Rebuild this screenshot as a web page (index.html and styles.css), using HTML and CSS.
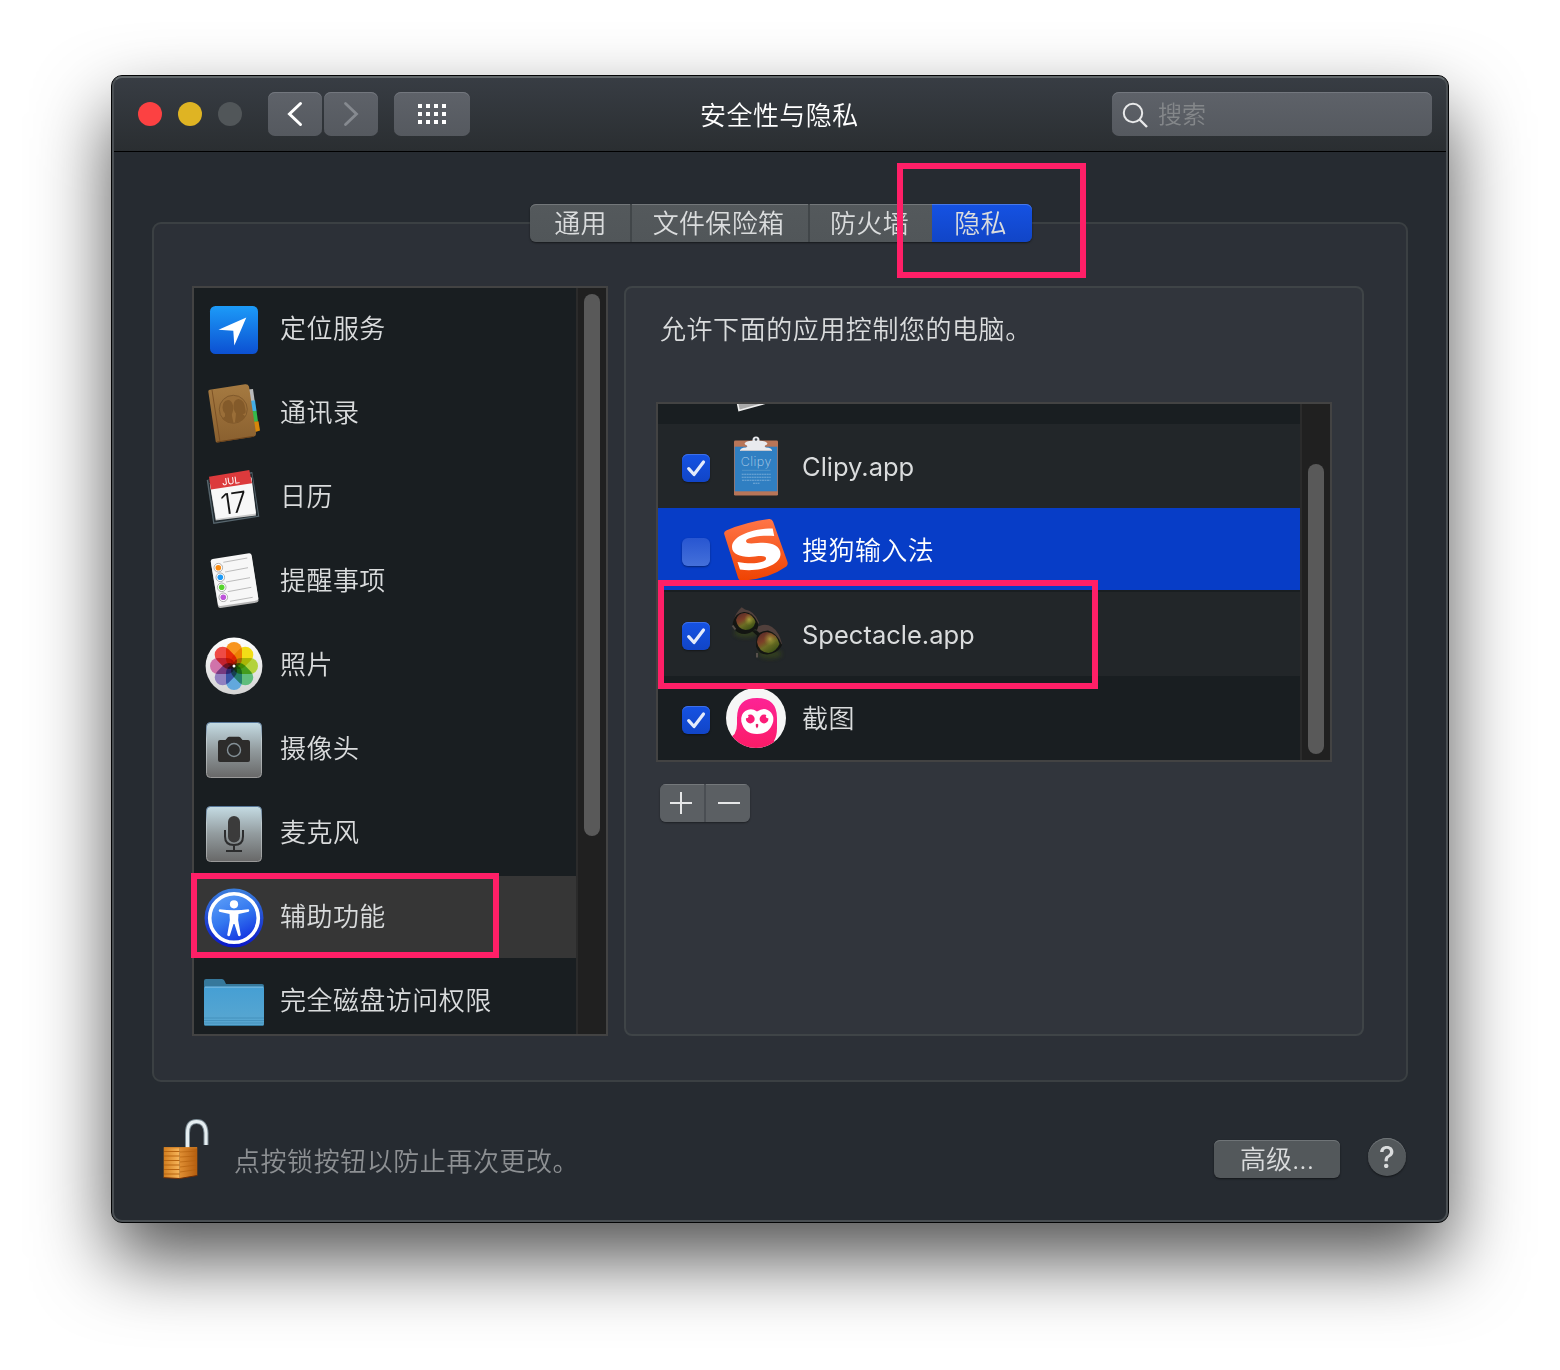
FILE: index.html
```html
<!DOCTYPE html>
<html lang="zh-CN">
<head>
<meta charset="utf-8">
<title>安全性与隐私</title>
<link rel="stylesheet" href="styles.css">
</head>
<body>
<main class="window">
  <header class="titlebar">
    <div class="lights"><i class="light red"></i><i class="light yellow"></i><i class="light off"></i></div>
    <div class="nav">
      <button class="tool"><svg width="54" height="44" viewBox="0 0 54 44"><path d="M32.5 11.5 21.5 22l11 10.500" fill="none" stroke="#fff" stroke-width="3" stroke-linecap="round"/></svg></button>
      <button class="tool"><svg width="54" height="44" viewBox="0 0 54 44"><path d="M21.500 11.500 32.500 22l-11 10.500" fill="none" stroke="#868a90" stroke-width="2.800" stroke-linecap="round"/></svg></button>
    </div>
    <button class="tool grid"><svg width="76" height="44" viewBox="0 0 76 44"><path d="M26 14h30M26 22h30M26 30h30" transform="translate(-2)" stroke="#fff" stroke-width="4" stroke-dasharray="4 4"/></svg></button>
    <h1 class="title">安全性与隐私</h1>
    <div class="search"><svg width="28" height="28" viewBox="0 0 28 28" fill="none" stroke="#e8e9ea" stroke-width="2"><circle cx="11" cy="11" r="9.200"/><path d="m17.500 17.500 7.500 7.500" stroke-width="2.400"/></svg><span>搜索</span></div>
  </header>

  <section class="content">
    <nav class="tabs">
      <a class="tab t1">通用</a><a class="tab t2">文件保险箱</a><a class="tab t3">防火墙</a><a class="tab t4 active">隐私</a>
      <span class="mark mark-tab"></span>
    </nav>
    <div class="group">
      <div class="listbox services">
        <ul class="rows">
          <li class="row">
            <svg class="icon" viewBox="0 0 60 60"><defs><linearGradient id="loc" x2="0" y2="1"><stop stop-color="#1c9bf8"/><stop offset="1" stop-color="#0c50d2"/></linearGradient></defs><rect x="6" y="6" width="48" height="48" rx="5.500" fill="url(#loc)"/><path d="M42.300 17.500 30.300 45.500 29.300 30.700 14.500 29.700z" fill="#fff"/></svg>
            <span>定位服务</span></li>
          <li class="row">
            <svg class="icon" viewBox="0 0 60 60"><defs><linearGradient id="book" x2="0" y2="1"><stop stop-color="#a57a41"/><stop offset="1" stop-color="#8a602f"/></linearGradient></defs><path d="m44 5.500 5-.5 1.700 12-6 1z" fill="#b9babb"/><path d="m46 17 5-.7L52.500 27l-6 1z" fill="#43aee6"/><path d="m47 27.500 5.500-.7L54 37.500l-6 1z" fill="#35b94b"/><path d="m49 38 5.500-.8L56 46.500l-6 2z" fill="#d88709"/><path d="M4.300 7.500q0-1.500 1.500-1.800L41 .2q3-.4 4 2.300L52 49q.4 3-2.500 3.700l-36 5.800q-1.500.3-1.800-1z" fill="url(#book)"/><path d="m8 6 8 52" stroke="#74491f" stroke-width=".8"/><path d="m13 58 37-5.700" stroke="#6c431b"/><circle cx="29.300" cy="25.300" r="14" fill="#9a6e38" stroke="#80592c"/><g fill="#835a2a"><path d="M24 16q-5.500.5-5.500 7.500 0 3.500 2.500 6v3l-3 2q5 5 11.500 4.500l-1.500-7q-.5-2 .5-3.500 1.500-3 .5-7-1.300-5.500-5-5.500z"/><path d="M34.500 15q-5 .5-5 7 0 5 2.500 7.500l-1 9q7-.5 10.500-6l-3-2.500q4 .2 3-4-.8-10.500-7-11z"/></g></svg>
            <span>通讯录</span></li>
          <li class="row">
            <svg class="icon" viewBox="0 0 60 60"><path d="M2.700 12 48.300 4l7 44.700-46 7.300z" fill="#57666e"/><path d="m4.200 12 43.700-6.500 6.200 42.300-43.800 6.700z" fill="#222b30"/><path d="M5.700 15 47 9l5 38.500-40.300 5z" fill="#c9c9c9"/><path d="m6 16 41.500-6.500 4.500 36-40 5.500z" fill="#f8f8f8"/><path d="M5 8.700 45.300 2 48 15.300 6.900 21.500z" fill="#dc3a3c"/><text x="18.500" y="17.500" transform="rotate(-8 18 18)" font-size="9.500" fill="#fff" class="glyph" font-weight="400">JUL</text><text x="16.500" y="45.500" transform="rotate(-8 28 34)" font-size="29" letter-spacing="-1" fill="#161616" class="day">17</text></svg>
            <span>日历</span></li>
          <li class="row">
            <svg class="icon" viewBox="0 0 60 60"><path d="M7 11q0-2 2-2.400L45 3q2-.2 2.600 1.800L54.500 48q.3 2-2 2.600L16.500 56q-2 .3-2.500-1.700z" fill="#b5b5b5"/><path d="M6.700 9.500q0-2 2-2.400L45 1.300q2-.2 2.600 1.800L54.300 46q.3 2-2 2.600L16.500 54q-2 .3-2.500-1.700z" fill="#f7f7f7"/><path d="m19.300 10.300 24-4.300M21 20l23-4.300M22 30l24-4.300M23.700 39.700l23.600-4.400M26 49.300l22.700-4" stroke="#b4b4b4" stroke-width=".9"/><g fill="#fff" stroke="#999" stroke-width=".8"><circle cx="14.300" cy="15.700" r="4.300"/><circle cx="16.300" cy="25.300" r="4.300"/><circle cx="17.700" cy="35.300" r="4.300"/><circle cx="19.300" cy="45.300" r="4.300"/></g><circle cx="14.300" cy="15.700" r="2.800" fill="#fa8b12"/><circle cx="16.300" cy="25.300" r="2.800" fill="#1b9af7"/><circle cx="17.700" cy="35.300" r="2.800" fill="#55d42c"/><circle cx="19.300" cy="45.300" r="2.800" fill="#bd54d9"/></svg>
            <span>提醒事项</span></li>
          <li class="row">
            <svg class="icon" viewBox="0 0 60 60"><defs><linearGradient id="disc" x2="0" y2="1"><stop stop-color="#fff"/><stop offset="1" stop-color="#d4d4d4"/></linearGradient></defs><circle cx="30" cy="30" r="28.400" fill="url(#disc)"/><g class="petals"><rect x="22" y="6" width="16" height="25" rx="8" fill="#f8951f"/><rect x="22" y="6" width="16" height="25" rx="8" fill="#f2dd17" transform="rotate(45 30 30)"/><rect x="22" y="6" width="16" height="25" rx="8" fill="#b3d23c" transform="rotate(90 30 30)"/><rect x="22" y="6" width="16" height="25" rx="8" fill="#60bd7c" transform="rotate(135 30 30)"/><rect x="22" y="6" width="16" height="25" rx="8" fill="#62a8dd" transform="rotate(180 30 30)"/><rect x="22" y="6" width="16" height="25" rx="8" fill="#9080c0" transform="rotate(225 30 30)"/><rect x="22" y="6" width="16" height="25" rx="8" fill="#d073aa" transform="rotate(270 30 30)"/><rect x="22" y="6" width="16" height="25" rx="8" fill="#ef4b46" transform="rotate(315 30 30)"/></g><circle cx="30" cy="30" r="1.500" fill="#fff"/></svg>
            <span>照片</span></li>
          <li class="row">
            <svg class="icon" viewBox="0 0 60 60"><defs><linearGradient id="tile" x2="0" y2="1"><stop stop-color="#c5dce4"/><stop offset=".5" stop-color="#929b9e"/><stop offset="1" stop-color="#686868"/></linearGradient><linearGradient id="rim" x2="0" y2="1"><stop stop-color="#577799"/><stop offset=".3" stop-color="#c1ccd0"/><stop offset="1" stop-color="#999"/></linearGradient></defs><rect x="2.500" y="2.500" width="55" height="55" rx="4" fill="url(#tile)" stroke="url(#rim)"/><path d="M16 20h5.500l2.300-2.700q.6-.6 1.500-.6h9.400q.9 0 1.500.6l2.300 2.700H44q2 0 2 2v18q0 2-2 2H16q-2 0-2-2V22q0-2 2-2z" fill="#2d2c2b"/><circle cx="30" cy="30" r="6.500" fill="#292929" stroke="#849097" stroke-width="1.400"/></svg>
            <span>摄像头</span></li>
          <li class="row">
            <svg class="icon" viewBox="0 0 60 60"><rect x="2.500" y="2.500" width="55" height="55" rx="4" fill="url(#tile)" stroke="url(#rim)"/><rect x="24" y="12" width="12" height="26.500" rx="6" fill="#3b3b3b"/><path d="M21 26v6.500q0 8.500 9 8.500t9-8.500V26M30 41v6M22 47h16" fill="none" stroke="#2c2d2e" stroke-width="2"/></svg>
            <span>麦克风</span></li>
          <li class="row selected">
            <svg class="icon" viewBox="0 0 60 60"><defs><linearGradient id="acc" x1=".2" x2=".7" y2="1"><stop stop-color="#5e9ff8"/><stop offset=".5" stop-color="#3478ef"/><stop offset="1" stop-color="#1231e1"/></linearGradient><linearGradient id="accrim" x2="0" y2="1"><stop stop-color="#3b7fdc"/><stop offset="1" stop-color="#0a17c9"/></linearGradient></defs><circle cx="30" cy="30" r="29.500" fill="url(#accrim)"/><circle cx="30" cy="30" r="24.300" fill="url(#acc)" stroke="#fff" stroke-width="3.600"/><circle cx="30" cy="16.300" r="4.100" fill="#fff"/><path d="M15.500 21.300q14.500 2 29 0 1.600.8.200 2.500L34.500 26q-.8 6 .3 10l2 11q-.6 1.800-2.600.8L30.500 36h-1l-3.700 11.800q-2 1-2.600-.8l2-11q1.100-4 .3-10l-10.200-2.200q-1.400-1.700.2-2.500z" fill="#fff"/></svg>
            <span>辅助功能</span></li>
          <li class="row">
            <svg class="icon" viewBox="0 0 60 60"><defs><linearGradient id="fold" x2="0" y2="1"><stop stop-color="#459fd4"/><stop offset="1" stop-color="#5aa7d0"/></linearGradient></defs><path d="M0 9q0-2 2-2h16q1.500 0 2.300 1.500L22 12h36q2 0 2 2v6H0z" fill="#36789b"/><path d="M0 16q0-1.500 1.500-1.500h57q1.500 0 1.500 1.500v36q0 2-2 2H2q-2 0-2-2z" fill="url(#fold)"/><path d="M1 15.200h58" stroke="#7dbce0"/><path d="M0 46h60M0 48.500h60M0 51h60" stroke="#3d8ab5" stroke-width=".7"/><path d="M1 53.500h58" stroke="#34799c"/></svg>
            <span>完全磁盘访问权限</span></li>
        </ul>
        <div class="track"><i class="thumb"></i></div>
        <span class="mark mark-service"></span>
      </div>

      <div class="panel">
        <p class="hint">允许下面的应用控制您的电脑。</p>
        <div class="listbox apps">
          <ul class="rows">
            <li class="peek"><svg width="40" height="10" viewBox="0 0 40 10"><path d="M1.500-1 3 6.500 30-1" fill="#a9a9a9" stroke="#eee" stroke-width="1.600"/></svg></li>
            <li class="row app alt"><i class="check on"><svg viewBox="0 0 28 28"><path d="m6.700 14.700 5.300 5.800L21.500 8" /></svg></i>
              <svg class="icon" viewBox="0 0 64 64"><rect x="10" y="6.500" width="44" height="55" rx="1.300" fill="#b87558"/><rect x="10.700" y="12.700" width="42.600" height="44.600" fill="#307fc2"/><path d="M16 17q0-3.500 6-3.500 2-.5 1-2-2-.5-2.500-1.700 1-2.800 8-3V6a3.500 3.500 0 0 1 7 0v.8q7 .2 8 3-.5 1.200-2.500 1.700-1 1.500 1 2 6 0 6 3.500z" fill="#e9eaee"/><path d="M16.500 16.500h31" stroke="#c2c7d1"/><circle cx="32" cy="5.500" r="1.300" fill="#40484e"/><text x="16.800" y="31.500" font-size="12.500" fill="#b4d2e9" textLength="30.500" class="glyph thin">Clipy</text><path d="M18 36.300h28.500" stroke="#5999cc" stroke-width=".8"/><path d="M17.700 40.300h29M17.700 43.300h29M18 46.300h28.500M29 49.300h6.500" stroke="#76abd7" stroke-width="1.100" stroke-dasharray="2 .5"/></svg>
              <span class="latin">Clipy.app</span></li>
            <li class="row app current"><i class="check"></i>
              <svg class="icon" viewBox="0 0 64 64"><defs><linearGradient id="sg" x2="0" y2="1"><stop stop-color="#ff7547"/><stop offset="1" stop-color="#ef4302"/></linearGradient></defs><path d="M.2 16q-.5-2.500 2-3.600Q22 4 45 1q3-.3 4 2.500L63.500 44q.8 2.500-1.200 4.500Q45 61 19 62.700q-4 .3-5-3z" fill="url(#sg)"/><path d="M48.700 10.500C28 10.500 8 18 8 29c0 8.500 12 11 23 9.500 8-1 11.500-.5 11 2.500C41 45 28 46.500 13.500 44L16 51.500C36 54.500 56.500 47 56.500 36c0-9.500-11-12.500-23-11-8 1-11.500.5-11.500-2C22.500 19 38 17 50.200 18z" fill="#fff"/></svg>
              <span>搜狗输入法</span></li>
            <li class="row app alt"><i class="check on"><svg viewBox="0 0 28 28"><path d="m6.700 14.700 5.300 5.800L21.500 8" /></svg></i>
              <svg class="icon" viewBox="0 0 64 64"><defs><linearGradient id="lens" x1=".1" y1=".1" x2=".7" y2="1"><stop stop-color="#5c2e28"/><stop offset=".35" stop-color="#7c4028"/><stop offset=".6" stop-color="#6c6c24"/><stop offset="1" stop-color="#3a5015"/></linearGradient><radialGradient id="glow"><stop stop-color="#b9b848" stop-opacity=".7"/><stop offset="1" stop-color="#8c9a30" stop-opacity="0"/></radialGradient><filter id="soft" x="-30%" y="-40%" width="160%" height="180%"><feGaussianBlur stdDeviation="2"/></filter></defs><g fill="#38461d" opacity=".7" filter="url(#soft)"><ellipse cx="22" cy="31" rx="12" ry="4.500"/><ellipse cx="46" cy="52" rx="12" ry="4.500"/></g><path d="M9.500 20Q11 11 17.700 5.300L21 7.500q9 1 14 13L32 26z" fill="#51403c"/><path d="M31 26.500q9-6.500 17-1.500 7 4.500 10 17l-8 3z" fill="#51403c"/><path d="M9 20q2-9 11-10 8-.5 13.500 10 1.500 3-.5 8l-2-1q-4 4.500-10 5-8 0-11-6l-1.500-2z" fill="#131512"/><path d="M28 29q4-2 7 2 4-2.500 9-2.500 9 2 14 14.500l-1 2q-5 7-14 7.500-8 0-11-8 0-7 1-11z" fill="#131512"/><path d="M12 18q2-7.500 9.500-7 7.500 1.500 10 9-2 8-10 8-8-1-9.500-10z" fill="url(#lens)"/><path d="M33 40q1-9.500 10-10 9.500 1 12.500 12-3 7.500-11 9-10-1-11.500-11z" fill="url(#lens)"/><ellipse cx="25" cy="17.500" rx="5" ry="6" fill="url(#glow)"/><ellipse cx="46" cy="37" rx="6.500" ry="7" fill="url(#glow)"/><path d="m8.500 23.500 3 4M33 51v4.500" stroke="#57504b" stroke-width="2"/></svg>
              <span class="latin">Spectacle.app</span></li>
            <li class="row app"><i class="check on"><svg viewBox="0 0 28 28"><path d="m6.700 14.700 5.300 5.800L21.500 8" /></svg></i>
              <svg class="icon" viewBox="0 0 64 64"><defs><clipPath id="owl"><circle cx="32" cy="32" r="30"/></clipPath><linearGradient id="pink" x2="0" y2="1"><stop stop-color="#fd2395"/><stop offset="1" stop-color="#fb1b65"/></linearGradient></defs><circle cx="32" cy="32" r="30" fill="#f6f6f6"/><g clip-path="url(#owl)"><path d="M4 52q9-2 9-14v-6q0-20 20-20t20 20v10q0 8-3 13v9H12z" fill="url(#pink)"/></g><path d="M33 25.500q8-5.500 14 1 3 3.500 2.200 9Q46 48 33 48T17.300 35.500q-1-7 4-10.500 6-3.500 11.700.5z" fill="#fff"/><circle cx="26.300" cy="33" r="4.400" fill="#fc1d78"/><circle cx="40" cy="33" r="4.400" fill="#fc1d78"/><circle cx="22.800" cy="30.500" r="1.700" fill="#fff"/><circle cx="43.600" cy="30.500" r="1.700" fill="#fff"/><path d="M31.700 38.500q1.300-1.300 2.600 0 .3 1.800-1.300 4-1.600-2.200-1.300-4z" fill="#e81c68"/></svg>
              <span>截图</span></li>
          </ul>
          <div class="track"><i class="thumb"></i></div>
          <span class="mark mark-app"></span>
        </div>
        <div class="stepper">
          <button><svg width="44" height="38" viewBox="0 0 44 38"><path d="M10 19h22M21 8v22" stroke="#e6e7e8" stroke-width="2"/></svg></button>
          <button><svg width="44" height="38" viewBox="0 0 44 38"><path d="M12 19h22" stroke="#e6e7e8" stroke-width="2"/></svg></button>
        </div>
      </div>
    </div>

    <footer class="footer">
      <svg class="lock" width="50" height="64" viewBox="0 0 50 64"><defs><linearGradient id="w1"><stop stop-color="#d27e1f"/><stop offset="1" stop-color="#f8b75c"/></linearGradient><linearGradient id="w2"><stop stop-color="#e08f33"/><stop offset="1" stop-color="#b45d0e"/></linearGradient></defs><path d="M27.500 32V17q0-11.500 9-11.500t9.500 11.500v12" fill="none" stroke="#7c8b94" stroke-width="5"/><path d="M27.500 32V17q0-11.500 9-11.500t9.500 11.500v12" fill="none" stroke="#e6eef1" stroke-width="3"/><path d="M3.700 31.300h16v31.200l-16-.8z" fill="url(#w1)"/><path d="M19.700 31.300h17.600V59.500l-17.600 3z" fill="url(#w2)"/><path d="M4 35.500h15.500M4 40h15.500M4 44.500h15.500M4 49h15.500M4 53.500h15.500M4 58h15.500" stroke="#b86511" stroke-width="1.200"/><path d="m20 36 17-.8M20 41l17-1M20 46l17-1.500M20 51l17-2M20 56l17-2.500" stroke="#b4610f" stroke-width=".7"/><path d="M3.700 61.700l16 .8 17.600-3" fill="none" stroke="#6e2b04"/><path d="M4 31.800h33" stroke="#d98324"/></svg>
      <p>点按锁按钮以防止再次更改。</p>
      <button class="advanced">高级...</button>
      <button class="help">?</button>
    </footer>
  </section>
</main>
</body>
</html>
```
FILE: styles.css
```css
* { box-sizing: border-box; margin: 0; padding: 0; }
body {
  width: 1560px; height: 1370px; padding: 75px 111px 0; overflow: hidden; background: #fff;
  font: 350 26px/38px Inter, "Noto Sans CJK SC", sans-serif; color: #dadcdd; letter-spacing: .45px;
}
svg { display: block; }
button { border: 0; font: inherit; color: inherit; letter-spacing: inherit; }
ul { list-style: none; }
.window {
  position: relative; width: 1338px; height: 1148px; border: 1px solid #030405; border-radius: 11px;
  background: #262b31; box-shadow: 0 36px 74px rgba(0,0,0,.68); display: flex; flex-direction: column;
}
.window::after {
  content: ""; position: absolute; inset: 0; border: 2px solid #4a4f53; border-top-color: #62686b; border-radius: 10px; pointer-events: none;
}
.titlebar {
  position: relative; height: 76px; border-bottom: 1px solid #000; border-radius: 10px 10px 0 0; flex: none;
  background: linear-gradient(#383d44, #2a2e31); display: flex; align-items: flex-start; padding: 16px 16px 0 26px;
}
.lights { display: flex; gap: 16px; padding-top: 10px; width: 130px; }
.light { width: 24px; height: 24px; border-radius: 50%; }
.red { background: #fc4142; }
.yellow { background: #dfb423; }
.off { background: #515659; }
.nav { display: flex; gap: 2px; margin-right: 16px; }
.tool, .search { height: 44px; border-radius: 7px; background: linear-gradient(#5e6269, #55595f); box-shadow: inset 0 1px #73777e; }
.tool { width: 54px; }
.grid { width: 76px; }
.title { flex: 1; padding: 5px 0 0 230px; font-size: 26px; font-weight: 350; color: #fff; white-space: nowrap; }
.search { width: 320px; padding: 10px 0 0 10px; display: flex; gap: 8px; line-height: 25px; font-size: 24px; color: #84878a; letter-spacing: 0; }
.content { display: flex; flex-direction: column; padding: 52px 40px 0; }
.tabs {
  position: relative; z-index: 1; width: 502px; height: 38px; margin: 0 0 -20px 378px; display: flex;
  border-radius: 6px; box-shadow: 0 1px 2px rgba(0,0,0,.5); letter-spacing: .3px;
}
.tab { height: 38px; line-height: 40px; text-align: center; background: linear-gradient(#54595c, #515659); box-shadow: inset 0 1px #73777a; border-right: 2px solid #414649; }
.t1 { width: 102px; border-radius: 6px 0 0 6px; padding-left: 1px; }
.t2 { width: 178px; padding-right: 3px; }
.t3 { width: 122px; border-right: 0; padding-right: 3px; }
.t4 { width: 100px; border: 0; border-radius: 0 6px 6px 0; padding-right: 3px; }
.tab.active { background: linear-gradient(#1552e3, #1145c7); box-shadow: inset 0 1px #4779eb; }
.mark { position: absolute; z-index: 3; border: 6px solid #ff1f67; }
.mark-tab { left: 367px; top: -41px; width: 189px; height: 115px; }
.mark-service { left: -3px; top: 585px; width: 308px; height: 85px; }
.mark-app { left: 0; top: 176px; width: 440px; height: 109px; }
.group {
  height: 860px; border: 2px solid #3b4043; border-radius: 9px; background: #2c3037;
  padding: 62px 42px 0 38px; display: flex; gap: 16px;
}
.listbox { position: relative; display: flex; border: 2px solid #434343; background: #191e21; }
.services { width: 416px; height: 750px; }
.rows { flex: 1; overflow: hidden; }
.row { height: 84px; display: flex; align-items: center; padding: 0 0 0 10px; border-bottom: 2px solid #191e21; white-space: nowrap; }
.row .icon { width: 60px; height: 60px; margin: 2px 16px 0 0; flex: none; }
.selected { background: #363636; }
.track { width: 30px; border-left: 2px solid #2b2b2b; background: #202020; padding: 6px 0 0 6px; }
.thumb { display: block; width: 16px; border-radius: 8px; background: #595959; }
.services .thumb { height: 542px; }
.panel { width: 740px; height: 750px; border: 2px solid #3f4447; border-radius: 8px; background: #31353c; padding: 23px 30px 0; }
.hint { margin-left: 4px; height: 91px; letter-spacing: .55px; }
.apps { width: 676px; height: 360px; }
.apps .thumb { height: 290px; margin-top: 54px; }
.peek { height: 20px; padding-left: 78px; }
.row.app { padding-left: 24px; border: 0; }
.row.app .icon { width: 64px; height: 64px; margin: 0 14px 0 14px; }
.row.app span { padding-top: 2px; }
.row.app .latin { font-size: 25.5px; font-weight: 370; letter-spacing: 0; padding-top: 1px; }
.alt { background: #222629; }
.row.current { height: 84px; background: linear-gradient(#073dc7 82px, #191e21 82px); color: #fff; }
.check { width: 28px; height: 28px; margin-top: 4px; border-radius: 6px; background: linear-gradient(#2856d1, #4470da); box-shadow: 0 1px 2px rgba(0,0,0,.4); }
.check.on { background: linear-gradient(#1552e3, #1145c7); box-shadow: inset 0 1px #3e70e8, 0 1px 2px rgba(0,0,0,.4); }
.check path { fill: none; stroke: #e4ebfb; stroke-width: 3.2; stroke-linecap: round; stroke-linejoin: round; }
.stepper { display: flex; gap: 2px; width: 90px; margin: 22px 0 0 4px; border-radius: 6px; overflow: hidden; background: #4a4e53; box-shadow: 0 1px 2px rgba(0,0,0,.4); }
.stepper button { width: 44px; height: 38px; background: #5b5f63; box-shadow: inset 0 1px #74787b; }
.footer { display: flex; align-items: flex-start; padding-top: 34px; }
.lock { margin: 0 0 0 8px; }
.footer p { margin: 27px 0 0 24px; width: 644px; color: #8d9093; flex: 1; letter-spacing: .55px; }
.advanced { width: 126px; height: 38px; line-height: 40px; margin: 24px 28px 0 0; border-radius: 6px; background: #53585b; box-shadow: inset 0 1px #6f7477, 0 1px 2px rgba(0,0,0,.5); letter-spacing: 0; }
.help { width: 38px; height: 38px; margin: 22px 2px 0 0; border-radius: 50%; background: #53585b; box-shadow: inset 0 1px #6f7477, 0 1px 2px rgba(0,0,0,.5); font-size: 30px; font-weight: 450; letter-spacing: 0; }
.petals { isolation: isolate; }
.petals rect { mix-blend-mode: multiply; }
.glyph { font-family: Inter, sans-serif; letter-spacing: 0; }
.day { font-family: Inter, sans-serif; font-weight: 300; letter-spacing: -1px; }
.thin { font-weight: 200; }
```
